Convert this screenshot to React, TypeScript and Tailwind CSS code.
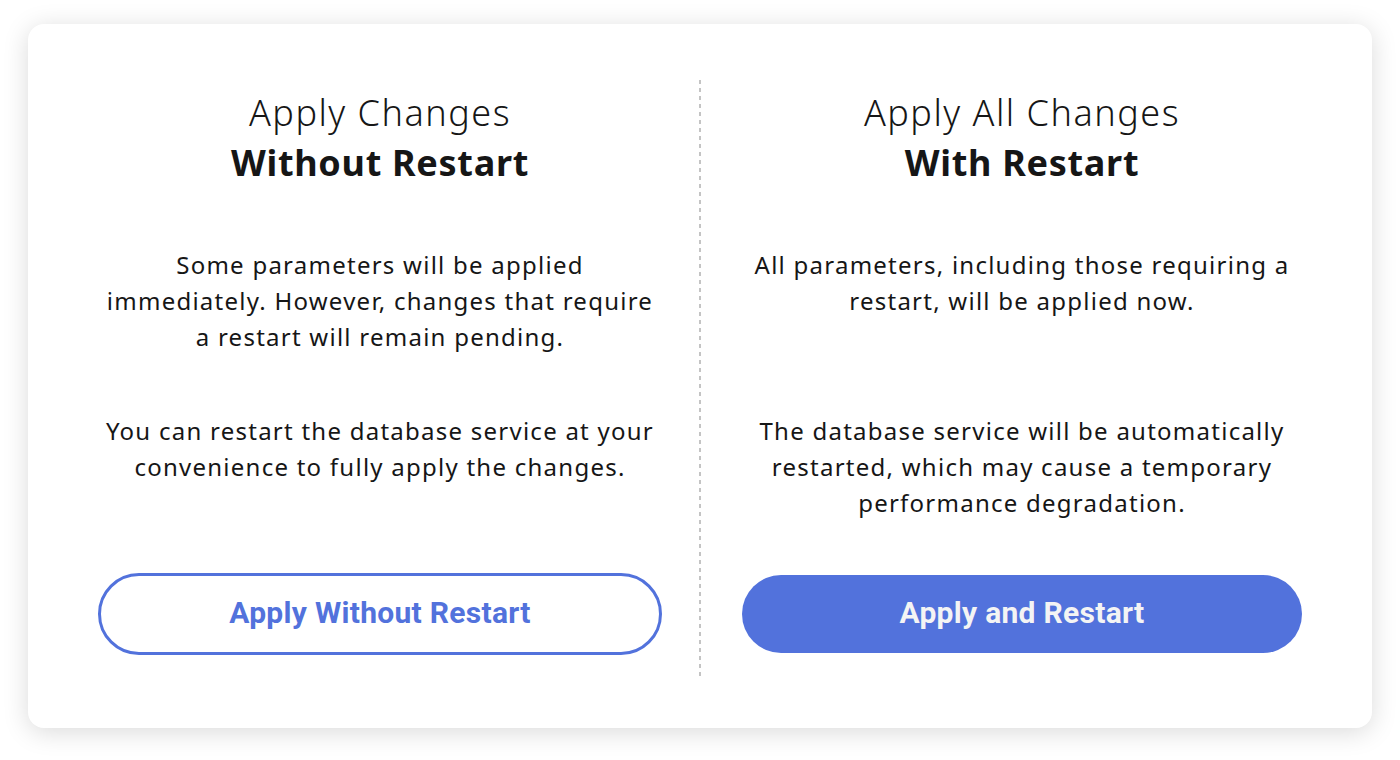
import React from "react";

const body = "whitespace-nowrap text-[24px] leading-[36px] tracking-[1.25px] text-[#161616] text-center";
const btnFont = { fontFamily: 'Roboto, sans-serif' };

export default function App() {
  return (
    <div className="w-[1400px] h-[760px] bg-white pt-[24px] pl-[28px]" style={{ fontFamily: '"Noto Sans", sans-serif' }}>
      <div className="w-[1344px] h-[704px] bg-white rounded-[16px] shadow-[0_4px_26px_rgba(0,0,0,0.15)] flex px-[70px] py-[56px]">
        <div className="w-[564px] flex flex-col items-center">
          <h2 className="mt-[8px] text-center text-[36px] leading-[50px] text-[#161616]">
            <div className="font-light tracking-[1.5px]">Apply Changes</div>
            <div className="font-bold tracking-[0.7px]">Without Restart</div>
          </h2>
          <p className={`${body} mt-[59px] h-[166px]`}>
            Some parameters will be applied<br />immediately. However, changes that require<br />a restart will remain pending.
          </p>
          <p className={`${body} h-[160px]`}>
            You can restart the database service at your<br />convenience to fully apply the changes.
          </p>
          <button className="w-[564px] h-[82px] pb-[3px] rounded-full border-[3px] border-[#5272dc] bg-white text-[#5272dc] text-[30px] font-bold tracking-[0.3px]" style={btnFont}>
            Apply Without Restart
          </button>
        </div>
        <div className="ml-[37px] mr-[41px] mb-[-4px] w-[2px] bg-[linear-gradient(to_bottom,#c4c4c4_50%,transparent_50%)] bg-[length:2px_8px]" />
        <div className="w-[560px] flex flex-col items-center">
          <h2 className="mt-[8px] text-center text-[36px] leading-[50px] text-[#161616]">
            <div className="font-light tracking-[1.5px]">Apply All Changes</div>
            <div className="font-bold tracking-[0.7px]">With Restart</div>
          </h2>
          <p className={`${body} mt-[59px] h-[166px]`}>
            All parameters, including those requiring a<br />restart, will be applied now.
          </p>
          <p className={`${body} h-[162px]`}>
            The database service will be automatically<br />restarted, which may cause a temporary<br />performance degradation.
          </p>
          <button className="w-[560px] h-[78px] pb-[3px] rounded-full bg-[#5272dc] text-[#f4f4f4] text-[30px] font-bold tracking-[0.3px]" style={btnFont}>
            Apply and Restart
          </button>
        </div>
      </div>
    </div>
  );
}
